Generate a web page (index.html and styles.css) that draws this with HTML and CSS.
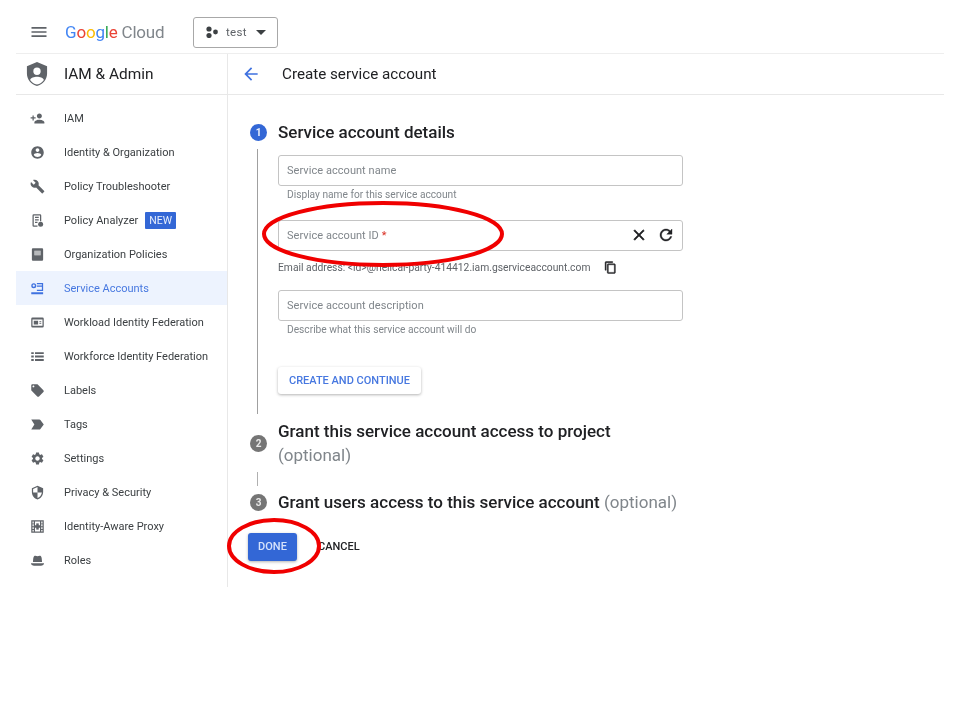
FILE: index.html
```html
<!DOCTYPE html>
<html lang="en">
<head>
<meta charset="utf-8">
<title>Create service account</title>
<link rel="stylesheet" href="styles.css">
</head>
<body>
<svg width="0" height="0" class="defs">
  <defs>
    <symbol id="i-iam" viewBox="0 0 24 24"><path d="M15 12c2.21 0 4-1.79 4-4s-1.79-4-4-4-4 1.79-4 4 1.79 4 4 4zm-9-2V7H4v3H1v2h3v3h2v-3h3v-2H6zm9 4c-2.67 0-8 1.34-8 4v2h16v-2c0-2.66-5.33-4-8-4z"/></symbol>
    <symbol id="i-identity" viewBox="0 0 24 24"><path d="M12 2C6.48 2 2 6.48 2 12s4.48 10 10 10 10-4.48 10-10S17.52 2 12 2zm0 3c1.66 0 3 1.34 3 3s-1.34 3-3 3-3-1.34-3-3 1.34-3 3-3zm0 14.2c-2.5 0-4.71-1.28-6-3.22.03-1.99 4-3.08 6-3.08 1.99 0 5.97 1.09 6 3.08-1.29 1.94-3.5 3.22-6 3.22z"/></symbol>
    <symbol id="i-build" viewBox="0 0 24 24"><path d="M22.7 19l-9.1-9.1c.9-2.3.4-5-1.5-6.9-2-2-5-2.4-7.4-1.3L9 6 6 9 1.6 4.7C.4 7.1.9 10.1 2.9 12.1c1.9 1.9 4.6 2.4 6.9 1.5l9.1 9.1c.4.4 1 .4 1.4 0l2.3-2.3c.5-.4.5-1.1.1-1.4z"/></symbol>
    <symbol id="i-analyzer" viewBox="0 0 24 24"><path fill-rule="evenodd" d="M6 2h10a2 2 0 0 1 2 2v9h-2V4H6v16h6v2H6a2 2 0 0 1-2-2V4a2 2 0 0 1 2-2zm2 4h6v2H8V6zm0 4h6v2H8v-2zm0 4h4v2H8v-2z"/><circle cx="17" cy="18" r="4"/></symbol>
    <symbol id="i-policy" viewBox="0 0 24 24"><path fill-rule="evenodd" d="M19 2H5C3.900 2 3 2.900 3 4v16c0 1.100.9 2 2 2h14c1.100 0 2-.9 2-2V4c0-1.100-.9-2-2-2zM7 6h10v7H7V6z"/><path opacity=".45" d="M7 6h10v7H7z"/></symbol>
    <symbol id="i-service" viewBox="0 0 24 24"><path fill-rule="evenodd" d="M6 3.500a4 4 0 1 1 0 8 4 4 0 0 1 0-8zm0 2.200a1.800 1.800 0 1 0 0 3.600 1.800 1.800 0 0 0 0-3.600zM11 3h10v13H11v-2h8V9h-8V7h8V5h-8V3zM2 18h19v3H2v-3z"/></symbol>
    <symbol id="i-workload" viewBox="0 0 24 24"><path fill-rule="evenodd" d="M4 4h16a2 2 0 0 1 2 2v12a2 2 0 0 1-2 2H4a2 2 0 0 1-2-2V6a2 2 0 0 1 2-2zm0 3v10h16V7H4zm2 2h7v6H6V9zm9 1h3v1.500h-3V10zm0 3h3v1.500h-3V13z"/></symbol>
    <symbol id="i-list" viewBox="0 0 24 24"><path d="M2 5h4v3H2V5zm0 5.500h4v3H2v-3zM2 16h4v3H2v-3zM8 5h14v3H8V5zm0 5.500h14v3H8v-3zM8 16h14v3H8v-3z"/></symbol>
    <symbol id="i-label" viewBox="0 0 24 24"><path d="M21.41 11.58l-9-9C12.05 2.22 11.55 2 11 2H4c-1.1 0-2 .9-2 2v7c0 .55.22 1.05.59 1.42l9 9c.36.36.86.58 1.41.58.55 0 1.05-.22 1.41-.59l7-7c.37-.36.59-.86.59-1.41 0-.55-.23-1.06-.59-1.42zM5.5 7C4.67 7 4 6.33 4 5.5S4.67 4 5.5 4 7 4.67 7 5.5 6.33 7 5.5 7z"/></symbol>
    <symbol id="i-tags" viewBox="0 0 24 24"><path d="M2 4l13 .01c.67 0 1.27.33 1.63.84L22 12l-5.370 7.160c-.36.51-.96.84-1.63.84L2 20l5-8L2 4z"/></symbol>
    <symbol id="i-settings" viewBox="0 0 24 24"><path d="M19.14 12.94c.04-.3.06-.61.06-.94 0-.32-.02-.64-.07-.94l2.03-1.58c.18-.14.23-.41.12-.61l-1.92-3.32c-.12-.22-.37-.29-.59-.22l-2.39.96c-.5-.38-1.03-.7-1.62-.94l-.36-2.54c-.04-.24-.24-.41-.48-.41h-3.84c-.24 0-.43.17-.47.41l-.36 2.54c-.59.24-1.13.57-1.62.94l-2.39-.96c-.22-.08-.47 0-.59.22L2.74 8.87c-.12.21-.08.47.12.61l2.03 1.58c-.05.3-.09.63-.09.94s.02.64.07.94l-2.03 1.58c-.18.14-.23.41-.12.61l1.92 3.32c.12.22.37.29.59.22l2.39-.96c.5.38 1.03.7 1.62.94l.36 2.54c.05.24.24.41.48.41h3.84c.24 0 .44-.17.47-.41l.36-2.54c.59-.24 1.13-.56 1.62-.94l2.39.96c.22.08.47 0 .59-.22l1.92-3.32c.12-.22.07-.47-.12-.61l-2.01-1.58zM12 15.6c-1.98 0-3.6-1.62-3.6-3.6s1.62-3.6 3.6-3.6 3.6 1.62 3.6 3.6-1.62 3.6-3.6 3.6z"/></symbol>
    <symbol id="i-privacy" viewBox="0 0 24 24"><path d="M12 1L3 5v6c0 5.55 3.84 10.74 9 12 5.16-1.26 9-6.45 9-12V5l-9-4zm0 10.99h7c-.53 4.12-3.28 7.79-7 8.94V12H5V6.3l7-3.11v8.8z"/></symbol>
    <symbol id="i-proxy" viewBox="0 0 24 24"><path fill-rule="evenodd" d="M2 2h20v20H2V2zm2 2v3h2V4H4zm0 4.500v3h2v-3H4zm0 4.500v3h2v-3H4zm0 4.500V20h2v-2.500H4zM18 4v3h2V4h-2zm0 4.500v3h2v-3h-2zm0 4.500v3h2v-3h-2zm0 4.500V20h2v-2.500h-2zM8 4v16h8V4H8z"/><path d="M10 7h4v10h-4z"/><path d="M7 10h10v4H7z"/></symbol>
    <symbol id="i-roles" viewBox="0 0 24 24"><path d="M6.500 5c1.500-1.200 3.500-.5 5.500 0 2-.5 4-1.200 5.500 0 1 .8 1.500 4 1.800 9.500H4.700C5 9 5.500 5.800 6.500 5z"/><path d="M1.500 16.500h21c0 2.500-2.500 4-5 4h-11c-2.500 0-5-1.500-5-4z"/></symbol>
    <symbol id="i-menu" viewBox="0 0 24 24"><path d="M3 18h18v-2H3v2zm0-5h18v-2H3v2zm0-7v2h18V6H3z"/></symbol>
    <symbol id="i-back" viewBox="0 0 24 24"><path d="M20 11H7.830l5.590-5.590L12 4l-8 8 8 8 1.410-1.410L7.830 13H20v-2z"/></symbol>
    <symbol id="i-close" viewBox="0 0 24 24"><path d="M19 6.410L17.590 5 12 10.590 6.410 5 5 6.410 10.590 12 5 17.590 6.410 19 12 13.410 17.590 19 19 17.590 13.410 12z"/></symbol>
    <symbol id="i-refresh" viewBox="0 0 24 24"><path d="M17.650 6.350C16.200 4.900 14.210 4 12 4c-4.420 0-7.990 3.580-7.990 8s3.570 8 7.990 8c3.730 0 6.840-2.550 7.730-6h-2.080c-.82 2.330-3.040 4-5.650 4-3.310 0-6-2.690-6-6s2.690-6 6-6c1.660 0 3.140.69 4.220 1.780L13 11h7V4l-2.350 2.350z"/></symbol>
    <symbol id="i-copy" viewBox="0 0 24 24"><path d="M16 1H4c-1.100 0-2 .9-2 2v14h2V3h12V1zm3 4H8c-1.100 0-2 .9-2 2v14c0 1.100.9 2 2 2h11c1.100 0 2-.9 2-2V7c0-1.100-.9-2-2-2zm0 16H8V7h11v14z"/></symbol>
  </defs>
</svg>

<div class="frame">
  <header class="topbar">
    <svg class="menu-icon"><use href="#i-menu"/></svg>
    <div class="logo"><span class="lb">G</span><span class="lr">o</span><span class="ly">o</span><span class="lb">g</span><span class="lg">l</span><span class="lr">e</span> <span class="lc">Cloud</span></div>
    <div class="picker">
      <svg class="picker-dots" viewBox="0 0 12 12"><circle cx="3" cy="3" r="2.600"/><circle cx="3" cy="9.500" r="2.600"/><circle cx="9.500" cy="6" r="2.400"/></svg>
      <span class="picker-name">test</span>
      <span class="picker-caret"></span>
    </div>
  </header>

  <div class="shell">
    <aside class="sidebar">
      <div class="side-head">
        <svg class="side-logo" viewBox="0 0 24 28"><path fill-rule="evenodd" d="M12 1l11 4.500v8c0 6.500-4.700 12-11 13.500C5.700 25.500 1 20 1 13.500v-8L12 1zm0 6a4 4 0 1 0 0 8 4 4 0 0 0 0-8zm0 10c-3 0-7 1.300-7.500 3.500C6 23 9 24.800 12 25.500c3-.7 6-2.500 7.500-5C19 18.300 15 17 12 17z"/></svg>
        <span class="side-title">IAM &amp; Admin</span>
      </div>
      <nav class="nav">
        <a class="nav-item"><svg class="nav-icon"><use href="#i-iam"/></svg><span>IAM</span></a>
        <a class="nav-item"><svg class="nav-icon"><use href="#i-identity"/></svg><span>Identity &amp; Organization</span></a>
        <a class="nav-item"><svg class="nav-icon"><use href="#i-build"/></svg><span>Policy Troubleshooter</span></a>
        <a class="nav-item"><svg class="nav-icon"><use href="#i-analyzer"/></svg><span>Policy Analyzer</span><span class="badge">NEW</span></a>
        <a class="nav-item"><svg class="nav-icon"><use href="#i-policy"/></svg><span>Organization Policies</span></a>
        <a class="nav-item active"><svg class="nav-icon"><use href="#i-service"/></svg><span>Service Accounts</span></a>
        <a class="nav-item"><svg class="nav-icon"><use href="#i-workload"/></svg><span>Workload Identity Federation</span></a>
        <a class="nav-item"><svg class="nav-icon"><use href="#i-list"/></svg><span>Workforce Identity Federation</span></a>
        <a class="nav-item"><svg class="nav-icon"><use href="#i-label"/></svg><span>Labels</span></a>
        <a class="nav-item"><svg class="nav-icon"><use href="#i-tags"/></svg><span>Tags</span></a>
        <a class="nav-item"><svg class="nav-icon"><use href="#i-settings"/></svg><span>Settings</span></a>
        <a class="nav-item"><svg class="nav-icon"><use href="#i-privacy"/></svg><span>Privacy &amp; Security</span></a>
        <a class="nav-item"><svg class="nav-icon"><use href="#i-proxy"/></svg><span>Identity-Aware Proxy</span></a>
        <a class="nav-item"><svg class="nav-icon"><use href="#i-roles"/></svg><span>Roles</span></a>
      </nav>
    </aside>

    <main class="main">
      <div class="crumb">
        <svg class="back-icon"><use href="#i-back"/></svg>
        <h1 class="crumb-title">Create service account</h1>
      </div>
      <div class="steps">
        <div class="step-head step-one">
          <span class="step-num current">1</span>
          <h2 class="step-title">Service account details</h2>
        </div>
        <div class="step-body">
          <div class="field"><span class="placeholder">Service account name</span></div>
          <p class="hint hint-name">Display name for this service account</p>
          <div class="field"><span class="placeholder">Service account ID <b class="req">*</b></span>
            <span class="field-actions">
              <svg class="act-close"><use href="#i-close"/></svg>
              <svg class="act-refresh"><use href="#i-refresh"/></svg>
            </span>
          </div>
          <div class="email"><span>Email address: &lt;id&gt;@helical-party-414412.iam.gserviceaccount.com</span><svg class="copy-icon"><use href="#i-copy"/></svg></div>
          <div class="field"><span class="placeholder">Service account description</span></div>
          <p class="hint hint-desc">Describe what this service account will do</p>
          <button class="btn-raised">CREATE AND CONTINUE</button>
        </div>
        <div class="step-head step-two">
          <span class="step-num">2</span>
          <h2 class="step-title">Grant this service account access to project<br><span class="optional">(optional)</span></h2>
        </div>
        <div class="step-link"></div>
        <div class="step-head step-three">
          <span class="step-num">3</span>
          <h2 class="step-title">Grant users access to this service account <span class="optional">(optional)</span></h2>
        </div>
        <div class="actions">
          <button class="btn-primary">DONE</button>
          <button class="btn-text">CANCEL</button>
        </div>
      </div>
    </main>
  </div>
</div>

<svg class="annotations" viewBox="0 0 960 720">
  <ellipse cx="383" cy="234" rx="119" ry="31"/>
  <ellipse cx="274" cy="546" rx="45" ry="26"/>
</svg>
</body>
</html>
```

FILE: styles.css
```css
* { box-sizing: border-box; }
html, body { margin: 0; padding: 0; background: #fff; }
body { font-family: Roboto, "Liberation Sans", sans-serif; color: #3c4043; width: 960px; height: 720px; overflow: hidden; position: relative; }
.defs { position: absolute; }
.frame { margin: 0 16px; height: 587px; display: flex; flex-direction: column; filter: blur(0.3px); }

.topbar { height: 54px; flex: none; display: flex; align-items: center; padding: 11px 0 0 13px; border-bottom: 1px solid #eeeeee; }
.menu-icon { width: 20px; height: 20px; fill: #5f6368; flex: none; }
.logo { margin-left: 16px; font-size: 17px; letter-spacing: -0.2px; white-space: nowrap; width: 99px; flex: none; }
.lb { color: #4285f4; } .lr { color: #ea4335; } .ly { color: #fbbc05; } .lg { color: #34a853; } .lc { color: #80868b; }
.picker { margin-left: 29px; width: 85px; height: 31px; border: 1px solid #a8a8a8; border-radius: 3px; display: flex; align-items: center; padding-left: 12px; }
.picker-dots { width: 12px; height: 12px; fill: #3c4043; flex: none; }
.picker-name { margin-left: 8px; font-size: 11.500px; color: #5f6368; letter-spacing: 0.3px; }
.picker-caret { margin-left: 9px; width: 0; height: 0; border-left: 5.500px solid transparent; border-right: 5.500px solid transparent; border-top: 5px solid #3c4043; }

.shell { flex: 1; display: flex; min-height: 0; }
.sidebar { width: 212px; flex: none; border-right: 1px solid #e8e8e8; }
.side-head { height: 41px; display: flex; align-items: center; padding-left: 10px; border-bottom: 1px solid #e8e8e8; }
.side-logo { width: 22px; height: 26px; fill: #5f6368; flex: none; }
.side-title { margin-left: 16px; font-size: 15.400px; color: #202124; }
.nav { padding-top: 6px; }
.nav-item { height: 34px; display: flex; align-items: center; padding-left: 14px; font-size: 11px; color: #3c4043; white-space: nowrap; }
.nav-item.active { background: #edf3fe; color: #4778e0; }
.nav-icon { width: 15px; height: 15px; fill: #5f6368; margin-right: 19px; flex: none; }
.nav-item.active .nav-icon { fill: #3f72e0; }
.badge { margin-left: 7px; background: #3367d6; color: #e8eefc; font-size: 10.500px; line-height: 17px; padding: 0 4px; border-radius: 1px; }

.main { flex: 1; min-width: 0; }
.crumb { height: 41px; display: flex; align-items: center; padding-left: 13px; border-bottom: 1px solid #e8e8e8; }
.back-icon { width: 20px; height: 20px; fill: #3f72e0; flex: none; }
.crumb-title { margin: 0 0 0 21px; font-size: 15.200px; font-weight: 400; color: #202124; }

.steps { padding: 26px 0 0 20px; }
.step-head { display: flex; align-items: center; padding-left: 2px; }
.step-num { width: 17px; height: 17px; flex: none; border-radius: 50%; background: #757575; color: #e8e8e8; font-size: 10px; font-weight: 700; display: flex; align-items: center; justify-content: center; margin-right: 11px; }
.step-num.current { background: #3367d6; color: #eef3fd; }
.step-title { margin: 0; font-size: 17px; font-weight: 500; line-height: 24px; color: #202124; }
.optional { font-weight: 400; color: #80868b; }

.step-one { height: 22px; }
.step-body { margin: 6px 0 0 9px; width: 430px; border-left: 1px solid #a0a0a0; padding: 6px 0 20px 20px; }
.field { width: 405px; height: 31px; border: 1px solid #c4c4c4; border-radius: 3px; display: flex; align-items: center; justify-content: space-between; padding: 0 7px 0 8px; }
.placeholder { font-size: 11px; color: #80868b; letter-spacing: 0.05px; }
.req { color: #d93025; font-weight: 400; }
.field-actions { display: flex; align-items: center; gap: 9px; margin-top: -2px; }
.act-close { width: 18px; height: 18px; fill: #202124; stroke: #202124; stroke-width: 0.8; }
.act-refresh { width: 18px; height: 18px; fill: #202124; stroke: #202124; stroke-width: 0.5; }
.hint { margin: 0; font-size: 10.200px; color: #80868b; padding-left: 9px; line-height: 14px; }
.hint-name { padding-top: 2px; height: 34px; }
.hint-desc { padding-top: 2px; height: 46px; }
.email { height: 39px; display: flex; align-items: center; font-size: 10.300px; color: #5f6368; padding-bottom: 7px; }
.copy-icon { width: 13px; height: 13px; fill: #202124; stroke: #202124; stroke-width: 0.8; margin-left: 14px; }
.btn-raised { display: block; width: 143px; height: 27px; border: 0; border-radius: 3px; background: #fff; color: #4778e0; font: 500 11px Roboto, sans-serif; box-shadow: 0 1px 3px rgba(0,0,0,.3); padding: 0; }

.step-two { margin-top: 5px; }
.step-link { margin: 5px 0 0 9px; width: 1px; height: 14px; background: #b0b0b0; }
.step-three { margin-top: 4px; }
.actions { margin-top: 19px; display: flex; align-items: center; }
.btn-primary { width: 49px; height: 28px; border: 0; border-radius: 3px; background: #3367d6; color: #d6e2fb; font: 500 11px Roboto, sans-serif; box-shadow: 0 1px 3px rgba(0,0,0,.3); padding: 0 0 1px; }
.btn-text { margin-left: 21px; border: 0; background: none; padding: 0 0 1px; color: #202124; font: 500 11px Roboto, sans-serif; }

.annotations { position: absolute; left: 0; top: 0; width: 960px; height: 720px; pointer-events: none; fill: none; stroke: #f00000; stroke-width: 4; }
```
